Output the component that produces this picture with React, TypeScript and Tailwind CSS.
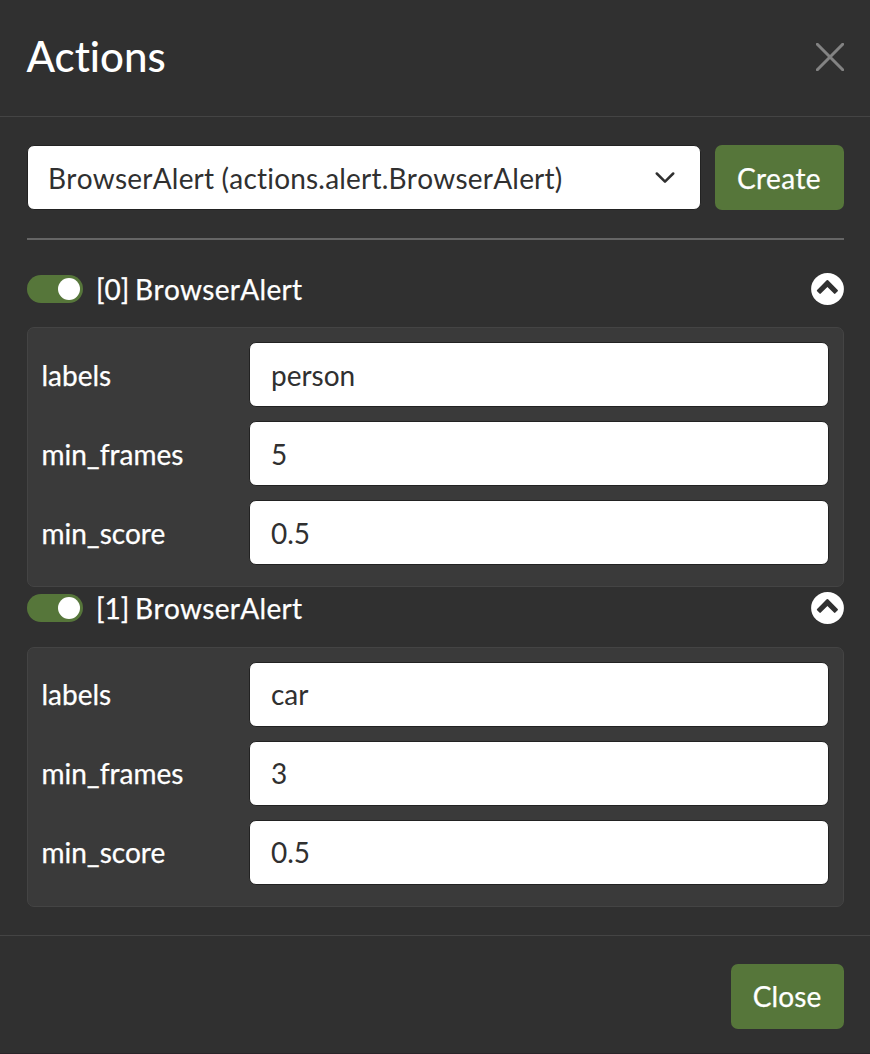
import { useState } from "react";

type Field = { name: string; value: string };
type Action = { index: number; type: string; fields: Field[] };

const ACTIONS: Action[] = [
  {
    index: 0,
    type: "BrowserAlert",
    fields: [
      { name: "labels", value: "person" },
      { name: "min_frames", value: "5" },
      { name: "min_score", value: "0.5" },
    ],
  },
  {
    index: 1,
    type: "BrowserAlert",
    fields: [
      { name: "labels", value: "car" },
      { name: "min_frames", value: "3" },
      { name: "min_score", value: "0.5" },
    ],
  },
];

function Toggle() {
  const [on, setOn] = useState(true);
  return (
    <button
      role="switch"
      aria-checked={on}
      onClick={() => setOn(!on)}
      className={`flex h-7 w-14 shrink-0 items-center rounded-full px-[3px] ${
        on ? "justify-end bg-[#56763a]" : "justify-start bg-[#777]"
      }`}
    >
      <span className="size-[22px] rounded-full bg-white" />
    </button>
  );
}

function CollapseIcon() {
  return (
    <svg viewBox="0 0 33 32" className="h-8 w-[33px]">
      <ellipse cx="16.500" cy="16" rx="16.400" ry="16" fill="#fff" />
      <path
        d="M15.700 7.300q.7-.6 1.400 0L26.700 16.900q.6.7 0 1.400L24.400 20.600q-.7.600-1.400 0L16.400 14.100 9.800 20.600q-.7.600-1.400 0L6.100 18.300q-.6-.7 0-1.400z"
        fill="#303030"
      />
    </svg>
  );
}

function ActionItem({ action, first }: { action: Action; first: boolean }) {
  return (
    <section>
      <div className={`flex items-start ${first ? "h-[59px]" : "h-[60px]"}`}>
        <div className="flex h-[42px] w-full items-center">
          <Toggle />
          <span className="ml-[13px] leading-[42px] [word-spacing:-1.5px] [-webkit-text-stroke:0.25px_#fff]">
            [{action.index}] <span className="tracking-[0.28px] [font-kerning:none]">{action.type}</span>
          </span>
          <button aria-label="Collapse" className="ml-auto">
            <CollapseIcon />
          </button>
        </div>
      </div>
      <div className="flex h-[260px] flex-col gap-3.5 rounded-[7px] border border-[#444] bg-[#3a3a3a] py-3.5 pr-3.5 pl-[13.500px]">
        {action.fields.map((field) => (
          <label key={field.name} className="flex h-[65px] shrink-0 items-center">
            <span
              className={`w-[207.500px] leading-[42px] [-webkit-text-stroke:0.25px_#fff] ${first ? "" : "pb-0.5"}`}
            >
              {field.name}
            </span>
            <input
              defaultValue={field.value}
              className={`h-[65px] min-w-0 flex-1 rounded-[7px] border border-[#222] bg-white px-[21px] text-[#303030] outline-none ${
                first ? "pt-px" : "pb-px"
              }`}
            />
          </label>
        ))}
      </div>
    </section>
  );
}

export default function App() {
  return (
    <div className="flex h-[1054px] w-[870px] flex-col border-b border-[#2a2529] bg-[#303030] font-[Lato,sans-serif] text-[28px] text-white [font-variant-ligatures:none]">
      <header className="flex h-[117px] items-center justify-between border-b border-[#444] pr-[26px] pb-0.5 pl-[26.500px]">
        <h1 className="pb-0.5 text-[42px] leading-[63px] font-medium">Actions</h1>
        <button aria-label="Close dialog">
          <svg viewBox="0 0 28 28" className="size-7" fill="none" stroke="#838383" strokeWidth="3" strokeLinecap="round">
            <path d="M1.300 1.300 26.700 26.700M26.700 1.300 1.300 26.700" />
          </svg>
        </button>
      </header>

      <main className="flex h-[818px] flex-col px-[27px] pt-7 pr-[26px]">
        <div className="flex gap-3.5">
          <button className="flex h-[65px] w-[674px] items-center justify-between rounded-[7px] border border-[#222] bg-white pr-[25px] pl-5 text-[#303030]">
            <span className="pt-px tracking-[0.2px] [font-kerning:none]">BrowserAlert (actions.alert.BrowserAlert)</span>
            <svg viewBox="0 0 20 12" className="h-3 w-5" fill="none" stroke="#303030" strokeWidth="2.500" strokeLinecap="round" strokeLinejoin="round">
              <path d="m1.800 1.500 8.200 8.200 8.200-8.200" />
            </svg>
          </button>
          <button className="h-[65px] w-[129px] rounded-[7px] bg-[#56763a] pt-px pr-px tracking-[0.4px] [-webkit-text-stroke:0.25px_#fff]">
            Create
          </button>
        </div>
        <hr className="mt-7 mb-7 border-t-2 border-[#656565]" />
        {ACTIONS.map((action, i) => (
          <ActionItem key={action.index} action={action} first={i === 0} />
        ))}
      </main>

      <footer className="flex flex-1 items-start justify-end border-t border-[#444] pt-7 pr-[26px]">
        <button className="h-[65px] w-[113px] rounded-[7px] bg-[#56763a] pr-px pb-0.5 tracking-[0.1px] [-webkit-text-stroke:0.25px_#fff]">
          Close
        </button>
      </footer>
    </div>
  );
}
